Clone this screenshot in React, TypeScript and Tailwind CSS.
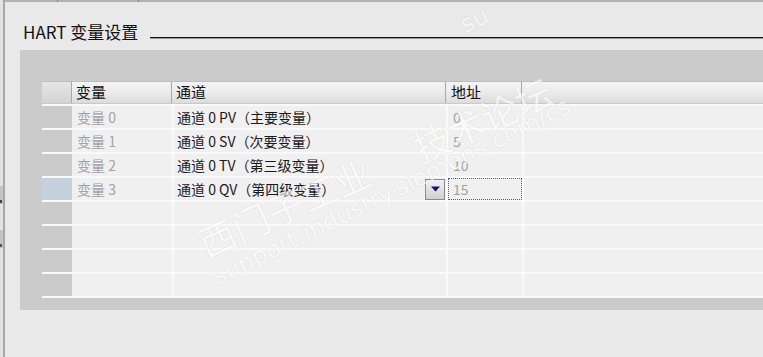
import React from "react";

const FONT = { fontFamily: '"Noto Sans CJK SC", "Noto Sans", sans-serif' };

const rows = [
  { v: "变量 0", ch: "通道 0 PV（主要变量）", addr: "0" },
  { v: "变量 1", ch: "通道 0 SV（次要变量）", addr: "5" },
  { v: "变量 2", ch: "通道 0 TV（第三级变量）", addr: "10" },
  { v: "变量 3", ch: "通道 0 QV（第四级变量）", addr: "15", sel: true },
  null,
  null,
  null,
  null,
];

function HeaderCell({ children, className = "" }: { children?: React.ReactNode; className?: string }) {
  return (
    <div
      className={
        "flex h-full items-center border-r border-r-[#a9a9a9] bg-gradient-to-b from-[#f4f4f4] via-[#ebebeb] to-[#dcdcdc] text-[15px] text-[#111] " +
        className
      }
    >
      {children}
    </div>
  );
}

export default function App() {
  return (
    <div className="relative flex h-[357px] w-[763px] overflow-hidden bg-[#e9e9e9]" style={FONT}>
      {/* left edge */}
      <div className="relative w-[3px] shrink-0 bg-[#e2e2e2]">
        <div className="absolute left-0 top-[186px] h-[18px] w-[3px] bg-[#c4c4c4]" />
        <div className="absolute left-0 top-[200px] h-[3px] w-[2px] bg-[#444]" />
        <div className="absolute left-0 top-[230px] h-[18px] w-[3px] bg-[#c4c4c4]" />
        <div className="absolute left-0 top-[244px] h-[3px] w-[2px] bg-[#555]" />
      </div>
      <div className="w-[2px] shrink-0 bg-[#a8a8a8]" />

      <div className="flex min-w-0 flex-1 flex-col">
        {/* top strip */}
        <div className="relative h-[2px] shrink-0 bg-[#b2b2b2]">
          <div className="absolute left-[52px] top-0 h-[2px] w-px bg-[#888]" />
          <div className="absolute left-[133px] top-0 h-[2px] w-px bg-[#888]" />
        </div>

        {/* title row */}
        <div className="flex h-[48px] shrink-0 items-start pl-[18px] pt-[19px]">
          <span className="whitespace-nowrap text-[17px] leading-[22px] text-[#111]">HART 变量设置</span>
          <div className="ml-[12px] mt-[16px] flex-1">
            <div className="h-px bg-[#111]" />
            <div className="h-px bg-[#9a9a9a]" />
          </div>
        </div>

        {/* panel */}
        <div className="ml-[15px] h-[260px] shrink-0 bg-[#cbcbcb] pl-[22px] pt-[31px]">
          <div className="flex flex-col">
            {/* header */}
            <div className="flex h-[23px] border-t border-t-[#bdbdbd] border-b border-b-[#c9c9c9]">
              <div className="h-full w-[30px] shrink-0 border-r border-r-[#a9a9a9] bg-gradient-to-b from-[#e6e6e6] to-[#d4d4d4]" />
              <HeaderCell className="w-[100px] shrink-0 pl-[4px]">变量</HeaderCell>
              <HeaderCell className="w-[274px] shrink-0 pl-[4px]">通道</HeaderCell>
              <HeaderCell className="w-[76px] shrink-0 pl-[5px]">地址</HeaderCell>
              <HeaderCell className="flex-1 border-r-0" />
            </div>

            {rows.map((r, i) => (
              <div key={i} className="flex h-[24px] border-t-2 border-t-[#fafafa]">
                <div className={"h-full w-[30px] shrink-0 " + (r && r.sel ? "bg-[#c4d0dc]" : "bg-[#cbcbcb]")} />
                <div className="flex h-full w-[100px] shrink-0 items-center bg-[#f0f0f0] pl-[5px] text-[14px] text-[#a3a3a3]">
                  {r ? r.v : ""}
                </div>
                <div className="flex h-full w-[274px] shrink-0 items-center border-l-2 border-l-[#fafafa] bg-[#f0f0f0] pl-[3px] text-[14px] text-[#1a1a1a]">
                  <span className="whitespace-nowrap">{r ? r.ch : ""}</span>
                  {r && r.sel ? (
                    <div className="ml-auto mr-[1px] flex h-[21px] w-[20px] items-center justify-center border border-[#8a8a8a] bg-gradient-to-b from-[#f2f2f2] to-[#cfcfcf]">
                      <svg width="9" height="6" viewBox="0 0 9 6">
                        <path d="M0 0.5 H9 L4.5 5.5 Z" fill="#10107a" />
                      </svg>
                    </div>
                  ) : null}
                </div>
                <div className="flex h-full w-[76px] shrink-0 items-center border-l-2 border-l-[#fafafa] bg-[#f0f0f0] text-[14px] text-[#a5a09a]">
                  {r && r.sel ? (
                    <div className="flex h-[22px] w-full items-center border border-dotted border-[#2a5fdc] pl-[4px]">
                      {r.addr}
                    </div>
                  ) : (
                    <span className="pl-[5px]">{r ? r.addr : ""}</span>
                  )}
                </div>
                <div className="h-full flex-1 border-l-2 border-l-[#fafafa] bg-[#f0f0f0]" />
              </div>
            ))}
            <div className="h-[2px] bg-[#fafafa]" />
          </div>
        </div>
      </div>

      {/* watermark overlay */}
      <div
        className="pointer-events-none absolute left-[200px] top-[226px] origin-left whitespace-nowrap text-[37px] leading-none text-white opacity-60"
        style={{ transform: "rotate(-24deg)", textShadow: "0 0 1px #bbb" }}
      >
        西门子工业&nbsp;&nbsp;&nbsp;&nbsp;&nbsp;&nbsp;技术论坛
      </div>
      <div
        className="pointer-events-none absolute left-[214px] top-[266px] origin-left whitespace-nowrap text-[24px] leading-none text-white opacity-60"
        style={{ transform: "rotate(-26deg)", textShadow: "0 0 1px #bbb", fontFamily: '"DejaVu Sans", sans-serif' }}
      >
        support.industry.siemens.com/cs
      </div>
      <div
        className="pointer-events-none absolute left-[462px] top-[14px] origin-left whitespace-nowrap text-[24px] leading-none text-white opacity-60"
        style={{ transform: "rotate(-26deg)", textShadow: "0 0 1px #bbb", fontFamily: '"DejaVu Sans", sans-serif' }}
      >
        su
      </div>
    </div>
  );
}
